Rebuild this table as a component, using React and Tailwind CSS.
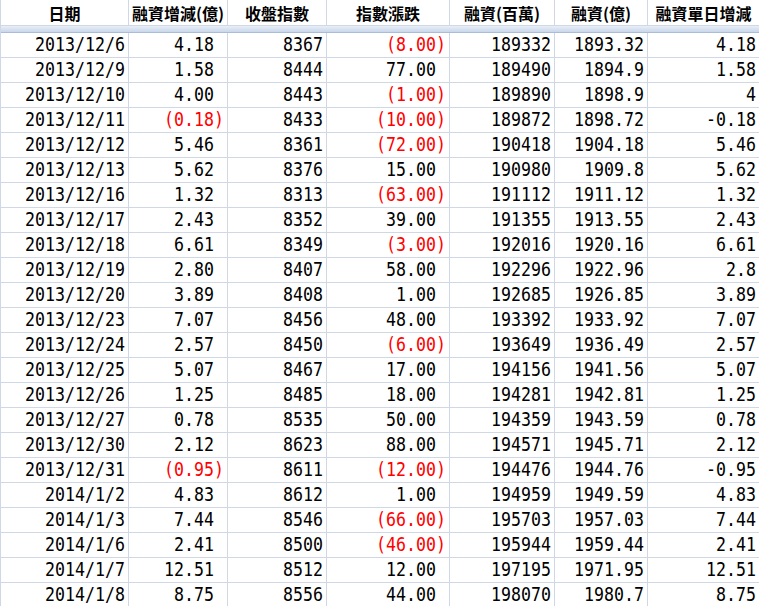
import React from "react";

const rows = [
  ["2013/12/6", "4.18", "8367", "(8.00)", "189332", "1893.32", "4.18"],
  ["2013/12/9", "1.58", "8444", "77.00", "189490", "1894.9", "1.58"],
  ["2013/12/10", "4.00", "8443", "(1.00)", "189890", "1898.9", "4"],
  ["2013/12/11", "(0.18)", "8433", "(10.00)", "189872", "1898.72", "-0.18"],
  ["2013/12/12", "5.46", "8361", "(72.00)", "190418", "1904.18", "5.46"],
  ["2013/12/13", "5.62", "8376", "15.00", "190980", "1909.8", "5.62"],
  ["2013/12/16", "1.32", "8313", "(63.00)", "191112", "1911.12", "1.32"],
  ["2013/12/17", "2.43", "8352", "39.00", "191355", "1913.55", "2.43"],
  ["2013/12/18", "6.61", "8349", "(3.00)", "192016", "1920.16", "6.61"],
  ["2013/12/19", "2.80", "8407", "58.00", "192296", "1922.96", "2.8"],
  ["2013/12/20", "3.89", "8408", "1.00", "192685", "1926.85", "3.89"],
  ["2013/12/23", "7.07", "8456", "48.00", "193392", "1933.92", "7.07"],
  ["2013/12/24", "2.57", "8450", "(6.00)", "193649", "1936.49", "2.57"],
  ["2013/12/25", "5.07", "8467", "17.00", "194156", "1941.56", "5.07"],
  ["2013/12/26", "1.25", "8485", "18.00", "194281", "1942.81", "1.25"],
  ["2013/12/27", "0.78", "8535", "50.00", "194359", "1943.59", "0.78"],
  ["2013/12/30", "2.12", "8623", "88.00", "194571", "1945.71", "2.12"],
  ["2013/12/31", "(0.95)", "8611", "(12.00)", "194476", "1944.76", "-0.95"],
  ["2014/1/2", "4.83", "8612", "1.00", "194959", "1949.59", "4.83"],
  ["2014/1/3", "7.44", "8546", "(66.00)", "195703", "1957.03", "7.44"],
  ["2014/1/6", "2.41", "8500", "(46.00)", "195944", "1959.44", "2.41"],
  ["2014/1/7", "12.51", "8512", "12.00", "197195", "1971.95", "12.51"],
  ["2014/1/8", "8.75", "8556", "44.00", "198070", "1980.7", "8.75"],
];

const headers = ["日期", "融資增減(億)", "收盤指數", "指數漲跌", "融資(百萬)", "融資(億)", "融資單日增減"];

const grid = "grid grid-cols-[128px_99px_99px_123px_105px_93px_111px]";
const accounting = [1, 3];

export default function App() {
  return (
    <div className="w-[759px] h-[606px] overflow-hidden bg-white">
      <div className="border-l border-[#d0d7e5]">
        <div className={`${grid} border-b border-[#d0d7e5]`}>
          {headers.map((h, i) => (
            <div
              key={i}
              className="h-[25px] border-r border-[#d0d7e5] last:border-r-0 flex items-center justify-center text-[16px] font-bold text-black leading-none"
              style={{ fontFamily: '"Noto Sans CJK TC", "Noto Sans CJK SC", sans-serif' }}
            >
              {h}
            </div>
          ))}
        </div>
        <div className="h-[7px] bg-gradient-to-b from-[#e9eff8] to-[#c9d7ea] border-b border-[#a9bdd8]"></div>
        {rows.map((r, ri) => (
          <div key={ri} className={grid}>
            {r.map((v, ci) => {
              const neg = v.startsWith("(");
              const isAcc = accounting.includes(ci);
              return (
                <div
                  key={ci}
                  className={`h-[25px] border-b border-r border-[#d0d7e5] last:border-r-0 flex items-center justify-end pr-[3px] text-[16.6px] leading-none font-['DejaVu_Sans_Mono',monospace] ${
                    neg ? "text-[#ff0000]" : "text-black"
                  }`}
                >
                  <span className={`inline-block scale-y-[1.18] ${isAcc && !neg ? "pr-[10px]" : ""}`}>{v}</span>
                </div>
              );
            })}
          </div>
        ))}
      </div>
    </div>
  );
}
